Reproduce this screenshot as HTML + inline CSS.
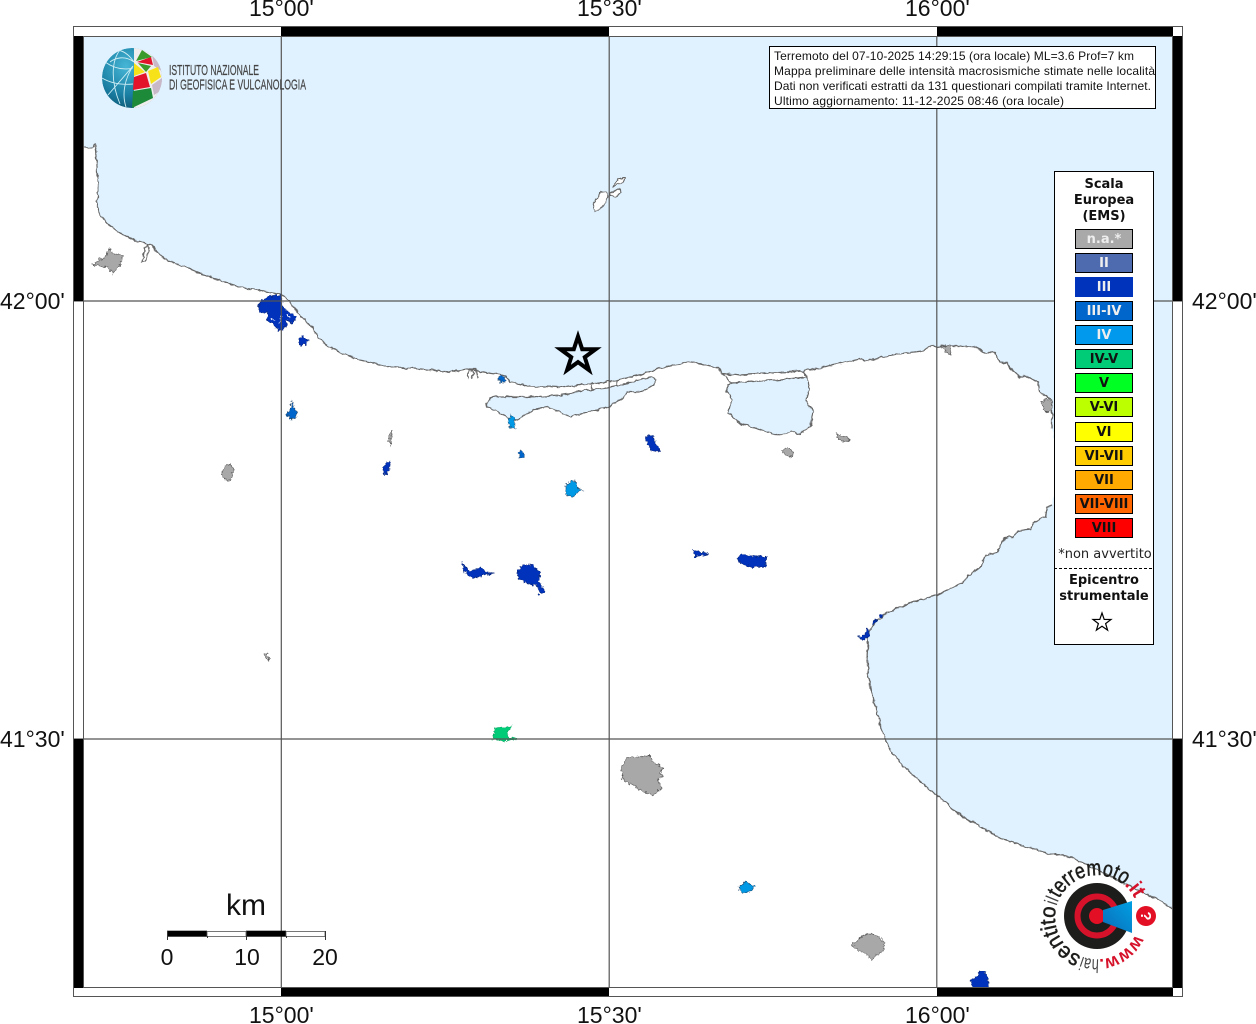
<!DOCTYPE html>
<html lang="it"><head><meta charset="utf-8"><title>Mappa intensità</title>
<style>
html,body{margin:0;padding:0;background:#fff;width:1256px;height:1024px;overflow:hidden}
svg{display:block;position:absolute;left:0;top:0}
.lab{font:23px "Liberation Sans",sans-serif;fill:#111}
.sm{font:12px "Liberation Sans",sans-serif;fill:#111}
.dv{font:bold 13px "DejaVu Sans",sans-serif;text-anchor:middle;fill:#111}
.sw{font:bold 13px "DejaVu Sans",sans-serif;text-anchor:middle}
.gr{fill:#a8a8a8;stroke:#555;stroke-width:.7}
.b3{fill:#0033bb;stroke:#0a2a80;stroke-width:.7}
.b4{fill:#0099e6;stroke:#246;stroke-width:.6}
.b34{fill:#0066cc;stroke:#246;stroke-width:.6}
.coast{fill:none;stroke:#666;stroke-width:1.3;stroke-linejoin:round}
.lake{fill:#e0f2ff;stroke:#666;stroke-width:1.2;stroke-linejoin:round}
</style></head><body>
<svg width="1256" height="1024" viewBox="0 0 1256 1024" xmlns="http://www.w3.org/2000/svg">
<defs>
<radialGradient id="gb" cx=".4" cy=".3" r=".8"><stop offset="0" stop-color="#46b6d6"/><stop offset=".6" stop-color="#1a7fa3"/><stop offset="1" stop-color="#0b4f6a"/></radialGradient>
<linearGradient id="cone" x1="0" y1="1" x2="1" y2="0"><stop offset="0" stop-color="#0b6cb8"/><stop offset="1" stop-color="#00a0e3"/></linearGradient>
<clipPath id="gc"><circle cx="132" cy="78" r="30"/></clipPath>
<clipPath id="mapc"><rect x="83" y="36" width="1090" height="952"/></clipPath>
<filter id="w1" filterUnits="userSpaceOnUse" x="0" y="0" width="1256" height="1024"><feTurbulence type="fractalNoise" baseFrequency=".18" numOctaves="2" seed="4"/><feDisplacementMap in="SourceGraphic" scale="4" xChannelSelector="R" yChannelSelector="G"/></filter>
<filter id="w2" filterUnits="userSpaceOnUse" x="0" y="0" width="1256" height="1024"><feTurbulence type="fractalNoise" baseFrequency=".35" numOctaves="2" seed="9"/><feDisplacementMap in="SourceGraphic" scale="5" xChannelSelector="R" yChannelSelector="G"/></filter>
<path id="ring" d="M1139,916 A42,42 0 1 1 1138.99,915.7"/>
</defs>
<rect x="83" y="36" width="1090" height="952" fill="#fff"/>
<g clip-path="url(#mapc)"><g filter="url(#w1)">
<polygon fill="#e0f2ff" points="60,20 1200,20 1200,925 1173,909 1153,897 1127,885 1100,871 1072,858 1063,855 1050,854 1040,851 1000,838 960,815 930,790 905,768 890,750 882,730 875,705 869,680 867,660 868,635 875,622 887,613 913,602 937,595 950,589 962,583 972,573 980,568 985,556 997,552 1005,538 1013,537 1018,531 1030,529 1033,523 1045,517 1047,507 1052,505 1060,470 1052,428 1052,400 1040,392 1038,382 1027,377 1020,377 1010,368 1008,363 1000,362 995,353 985,352 975,347 965,346 943,346 937,347 932,345 923,351 897,354 867,361 860,359 843,363 803,371 740,375 722,373 718,368 703,364 688,362 680,364 660,368 640,375 609,382 590,384 560,387 530,386 510,382 505,376 500,375 478,371 467,369 450,372 420,369 390,367 360,360 335,350 323,343 310,325 300,315 285,297 280,294 265,291 250,289 235,285 210,277 185,267 165,259 155,250 152,245 147,244 135,240 120,233 108,224 100,215 97,207 98,185 97,175 97,165 96,150 95,144 92,147 88,148 83,147 60,147"/>
<polyline class="coast" points="1190,920 1173,909 1153,897 1127,885 1100,871 1072,858 1063,855 1050,854 1040,851 1000,838 960,815 930,790 905,768 890,750 882,730 875,705 869,680 867,660 868,635 875,622 887,613 913,602 937,595 950,589 962,583 972,573 980,568 985,556 997,552 1005,538 1013,537 1018,531 1030,529 1033,523 1045,517 1047,507 1052,505"/>
<polyline class="coast" points="1052,428 1052,400 1040,392 1038,382 1027,377 1020,377 1010,368 1008,363 1000,362 995,353 985,352 975,347 965,346 943,346 937,347 932,345 923,351 897,354 867,361 860,359 843,363 803,371 740,375 722,373 718,368 703,364 688,362 680,364 660,368 640,375 609,382 590,384 560,387 530,386 510,382 505,376 500,375 478,371 467,369 450,372 420,369 390,367 360,360 335,350 323,343 310,325 300,315 285,297 280,294 265,291 250,289 235,285 210,277 185,267 165,259 155,250 152,245 147,244 135,240 120,233 108,224 100,215 97,207 98,185 97,175 97,165 96,150 95,144 92,147 88,148 83,147"/>
<polygon class="lake" points="486,403 493,397 530,397 560,395 590,390 607,388 617,386 635,381 650,377 657,380 653,385 642,392 627,392 622,399 607,408 583,413 570,417 560,412 547,407 533,410 517,420 508,417 500,413 488,407"/>
<polygon class="lake" points="727,385 732,383 753,381 775,380 807,377 809,390 806,400 813,412 810,427 800,434 792,431 780,436 758,429 740,423 728,413 732,400 727,390"/>
<path class="coast" d="M592,382v7M617,380v6M722,373l10,10M803,371l4,6M142,262l3,-14 3,-3 1,3 -3,13 -3,1zM468,378l2,-9h6l2,9M471,369l3,5 -3,4"/>
<g fill="#fff" stroke="#666" stroke-width="1.1">
<polygon points="593,203 600,193 607,192 608,198 602,208 595,211"/>
<polygon points="610,193 620,188 622,192 615,197 610,196"/>
<polygon points="613,187 618,178 625,178 623,183 618,184"/>
</g>
</g>
<g filter="url(#w2)">
<polygon class="gr" points="93,265 100,258 103,260 110,248 112,253 123,256 120,265 113,273 107,267"/>
<polygon class="gr" points="221,474 225,466 230,464 234,469 231,480 226,480"/>
<polygon class="gr" points="781,451 787,447 793,452 792,457 785,455"/>
<polygon class="gr" points="836,432 838,435 845,436 850,440 843,442 838,439"/>
<polygon class="gr" points="941,346 950,345 951,355 947,353"/>
<polygon class="gr" points="1041,402 1047,398 1052,402 1052,412 1045,411"/>
<polygon class="gr" points="621,767 627,758 640,757 650,755 653,762 663,767 660,773 663,777 658,780 662,788 653,795 643,792 633,785 623,780 622,773"/>
<polygon class="gr" points="852,945 860,938 868,933 878,936 885,943 882,953 876,955 872,960 866,953 857,950"/>
<polygon class="gr" points="264,654 267,652 269,660 266,658"/>
<polygon class="gr" points="389,433 392,431 391,445 389,441"/>
<polygon class="b3" points="258,307 262,300 268,296 281,295 282,307 290,313 297,317 292,323 287,320 286,325 283,330 278,330 274,325 267,320 268,313 260,312"/>
<path d="M270,318l5,3M282,316l-3,8M288,314l1,5" stroke="#fff" stroke-width="1.300" fill="none"/>
<polygon class="b3" points="298,340 303,336 308,340 306,345 300,345"/>
<polygon class="b34" points="287,414 291,408 292,400 294,408 297,412 296,418 290,419"/>
<polygon class="b3" points="384,466 390,461 389,470 386,475 383,472"/>
<polygon class="b34" points="519,452 523,451 524,459 520,458"/>
<polygon class="b34" points="499,376 505,376 505,382 499,382"/>
<polygon class="b4" points="508,421 511,414 514,418 516,428 510,428"/>
<polygon class="b4" points="566,484 575,480 578,488 583,490 577,492 573,497 566,495"/>
<polygon class="b3" points="645,437 653,435 656,445 661,451 651,451 648,444"/>
<polygon class="b3" points="462,563 470,572 480,567 485,572 494,573 483,575 475,578 467,575 463,568"/>
<polygon class="b3" points="517,573 523,565 533,565 540,572 539,582 545,592 540,594 537,585 530,584 520,580"/>
<polygon class="b3" points="693,550 709,554 695,557"/>
<polygon class="b3" points="737,558 740,555 767,557 765,567 750,567 740,563"/>
<polygon fill="#00cc77" stroke="#1a6" stroke-width=".7" points="493,739 495,728 512,726 507,732 508,737 518,739 503,741"/>
<polygon class="b4" points="739,887 745,882 755,886 750,892 742,893"/>
<polygon class="b3" points="971,980 977,976 979,971 985,972 988,980 989,988 973,988"/>
<polygon class="b3" points="859,637 865,635 867,628 870,632 868,638 862,640"/>
<polygon class="b3" points="872,622 878,619 873,625"/>
<polygon class="b3" points="880,615 883,616 880,618"/>
</g></g>
<g stroke="#555" stroke-width="1.200" fill="none">
<path d="M281.300,36V988M609.200,36V988M936.800,36V988M73,301H1183M73,739H1183"/>
</g>
<g fill="#000">
<rect x="281" y="27" width="328" height="9"/><rect x="937" y="27" width="236" height="9"/>
<rect x="281" y="988" width="328" height="9"/><rect x="937" y="988" width="236" height="9"/>
<rect x="74" y="36" width="9" height="265"/><rect x="74" y="739" width="9" height="249"/>
<rect x="1173" y="36" width="9" height="265"/><rect x="1173" y="739" width="9" height="249"/>
</g>
<rect x="73.500" y="26.500" width="1109" height="970" fill="none" stroke="#555"/>
<rect x="83.500" y="36.500" width="1089" height="951" fill="none" stroke="#555"/>
<polygon points="578,336.500 582.200,349.300 595.600,349.300 584.750,357.200 588.900,370 578,362.100 567.100,370 571.250,357.200 560.400,349.300 573.800,349.300" fill="none" stroke="#000" stroke-width="4" stroke-miterlimit="8"/>
<text class="lab" x="249" y="16">15°00'</text><text class="lab" x="577" y="16">15°30'</text><text class="lab" x="905" y="16">16°00'</text>
<text class="lab" x="249" y="1023">15°00'</text><text class="lab" x="577" y="1023">15°30'</text><text class="lab" x="905" y="1023">16°00'</text>
<text class="lab" x="0" y="309">42°00'</text><text class="lab" x="0" y="747">41°30'</text>
<text class="lab" x="1192" y="309">42°00'</text><text class="lab" x="1192" y="747">41°30'</text>
<g clip-path="url(#gc)">
<circle cx="132" cy="78" r="30" fill="url(#gb)"/>
<rect x="134" y="46" width="30" height="64" fill="#eee"/>
<g fill="none" stroke="#cfeef5" stroke-width=".9">
<path d="M102,78C112,84 122,85 133,84M105,62C115,69 125,70 133,68M118,50C127,52 131,58 134,62C125,55 115,58 110,62M133,66C124,80 122,95 126,107M133,66L108,95M120,50C112,60 110,80 120,104"/>
</g>
<polygon fill="#3a9a2a" points="136,61 142,50 152,57"/>
<polygon fill="#e3132b" points="137,62 151,57 153,65"/>
<polygon fill="#c8b8c8" points="152,55 160,62 163,72 154,66"/>
<polygon fill="#f7e21a" points="134,63 145,72 134,76"/>
<polygon fill="#3a9a2a" points="138,63 151,66 146,72"/>
<polygon fill="#f7e21a" points="148,71 158,67 161,77 151,84"/>
<polygon fill="#e3132b" points="134,77 146,73 150,87 133,90"/>
<polygon fill="#1d8a3a" points="133,91 151,88 153,98 132,108"/>
<polygon fill="#c8b8c8" points="152,85 162,78 162,90 154,95"/>
</g>
<text x="169" y="75" font-family="Liberation Sans,sans-serif" font-size="14.500" fill="#444" stroke="#444" stroke-width=".2" textLength="90" lengthAdjust="spacingAndGlyphs">ISTITUTO NAZIONALE</text>
<text x="169" y="89.500" font-family="Liberation Sans,sans-serif" font-size="14.500" fill="#444" stroke="#444" stroke-width=".2" textLength="137" lengthAdjust="spacingAndGlyphs">DI GEOFISICA E VULCANOLOGIA</text>
<rect x="769.500" y="46.500" width="386" height="62" fill="#fff" stroke="#000"/>
<text class="sm" x="774" y="60" textLength="360">Terremoto del 07-10-2025 14:29:15 (ora locale) ML=3.6 Prof=7 km</text>
<text class="sm" x="774" y="75" textLength="381">Mappa preliminare delle intensità macrosismiche stimate nelle località</text>
<text class="sm" x="774" y="90" textLength="377">Dati non verificati estratti da 131 questionari compilati tramite Internet.</text>
<text class="sm" x="774" y="105" textLength="290">Ultimo aggiornamento: 11-12-2025 08:46 (ora locale)</text>
<rect x="1054.500" y="171.500" width="99" height="473" fill="#fff" stroke="#000"/>
<text class="dv" x="1104" y="188">Scala</text><text class="dv" x="1104" y="204">Europea</text><text class="dv" x="1104" y="220">(EMS)</text>
<g stroke="#000" stroke-width="1">
<rect x="1075.500" y="229.500" width="57" height="19" fill="#a9a9a9"/>
<rect x="1075.500" y="253.500" width="57" height="19" fill="#4f6bb0"/>
<rect x="1075.500" y="277.500" width="57" height="19" fill="#0033bb" stroke="#0033bb"/>
<rect x="1075.500" y="301.500" width="57" height="19" fill="#0066cc"/>
<rect x="1075.500" y="325.500" width="57" height="19" fill="#0099ee"/>
<rect x="1075.500" y="349.500" width="57" height="19" fill="#00cc77"/>
<rect x="1075.500" y="373.500" width="57" height="19" fill="#00ff22"/>
<rect x="1075.500" y="397.500" width="57" height="19" fill="#bbff00"/>
<rect x="1075.500" y="422.500" width="57" height="19" fill="#ffff00"/>
<rect x="1075.500" y="446.500" width="57" height="19" fill="#ffcc00"/>
<rect x="1075.500" y="470.500" width="57" height="19" fill="#ffaa00"/>
<rect x="1075.500" y="494.500" width="57" height="19" fill="#ff6600"/>
<rect x="1075.500" y="518.500" width="57" height="19" fill="#ff0000"/>
</g>
<g fill="#eee"><text class="sw" x="1104" y="243" fill="#eee">n.a.*</text><text class="sw" x="1104" y="267" fill="#eee">II</text><text class="sw" x="1104" y="291" fill="#eee">III</text><text class="sw" x="1104" y="315" fill="#eee">III-IV</text><text class="sw" x="1104" y="339" fill="#eee">IV</text></g>
<g fill="#111"><text class="sw" x="1104" y="363" fill="#111">IV-V</text><text class="sw" x="1104" y="387" fill="#111">V</text><text class="sw" x="1104" y="411" fill="#111">V-VI</text><text class="sw" x="1104" y="436" fill="#111">VI</text><text class="sw" x="1104" y="460" fill="#111">VI-VII</text><text class="sw" x="1104" y="484" fill="#111">VII</text><text class="sw" x="1104" y="508" fill="#111">VII-VIII</text><text class="sw" x="1104" y="532" fill="#111">VIII</text></g>
<text x="1105" y="558" font-family="DejaVu Sans,sans-serif" font-size="13" text-anchor="middle" fill="#222">*non avvertito</text>
<line x1="1054" y1="568.500" x2="1152" y2="568.500" stroke="#000" stroke-dasharray="3 2"/>
<text class="dv" x="1104" y="584">Epicentro</text><text class="dv" x="1104" y="600">strumentale</text>
<polygon points="1102,613 1104.200,619.400 1111,619.500 1105.600,623.600 1107.600,630.100 1102,626.200 1096.400,630.100 1098.400,623.600 1093,619.500 1099.800,619.400" fill="#fff" stroke="#000" stroke-width="1.2"/>
<text x="226" y="915" font-family="Liberation Sans,sans-serif" font-size="30" fill="#111">km</text>
<rect x="167" y="930.700" width="40" height="6" fill="#000"/><rect x="207" y="931.500" width="39" height="5" fill="#fff" stroke="#555" stroke-width=".8"/><rect x="246" y="930.700" width="40" height="6" fill="#000"/><rect x="286" y="931.500" width="39" height="5" fill="#fff" stroke="#555" stroke-width=".8"/>
<path d="M167.500,931V940M246.500,931V940M325.500,931V940M207.500,936V938M286.500,936V938" stroke="#333" fill="none"/>
<g font-family="Liberation Sans,sans-serif" font-size="23" text-anchor="middle" fill="#111"><text x="167" y="965">0</text><text x="247" y="965">10</text><text x="325" y="965">20</text></g>
<circle cx="1097" cy="916" r="33" fill="#1d1d1b"/>
<circle cx="1097" cy="916" r="19.500" fill="none" stroke="#d6122a" stroke-width="6"/>
<circle cx="1097" cy="916" r="8" fill="#e30f24"/>
<polygon points="1103,910 1132,901 1132,933 1103,922" fill="url(#cone)"/>
<circle cx="1146" cy="916" r="10" fill="#e30f24"/>
<text x="0" y="0" transform="translate(1146,916) rotate(90)" font-family="Liberation Sans,sans-serif" font-weight="bold" font-size="15" fill="#fff" text-anchor="middle" dy="5">?</text>
<g font-family="Liberation Sans,sans-serif">
<text font-size="18" font-weight="bold" fill="#d6122a"><textPath href="#ring" startOffset="19" textLength="46" lengthAdjust="spacingAndGlyphs">www.</textPath></text>
<text font-size="19" fill="#444"><textPath href="#ring" startOffset="65" textLength="17" lengthAdjust="spacingAndGlyphs">hai</textPath></text>
<text font-size="22" fill="#1d1d1b" stroke="#1d1d1b" stroke-width=".5"><textPath href="#ring" startOffset="83" textLength="60" lengthAdjust="spacingAndGlyphs">sentito</textPath></text>
<text font-size="19" fill="#444"><textPath href="#ring" startOffset="144" textLength="7" lengthAdjust="spacingAndGlyphs">il</textPath></text>
<text font-size="22" fill="#1d1d1b" stroke="#1d1d1b" stroke-width=".5"><textPath href="#ring" startOffset="152" textLength="76" lengthAdjust="spacingAndGlyphs">terremoto</textPath></text>
<text font-size="21" font-weight="bold" fill="#d6122a"><textPath href="#ring" startOffset="228" textLength="17" lengthAdjust="spacingAndGlyphs">.it</textPath></text>
</g>
</svg>
</body></html>
